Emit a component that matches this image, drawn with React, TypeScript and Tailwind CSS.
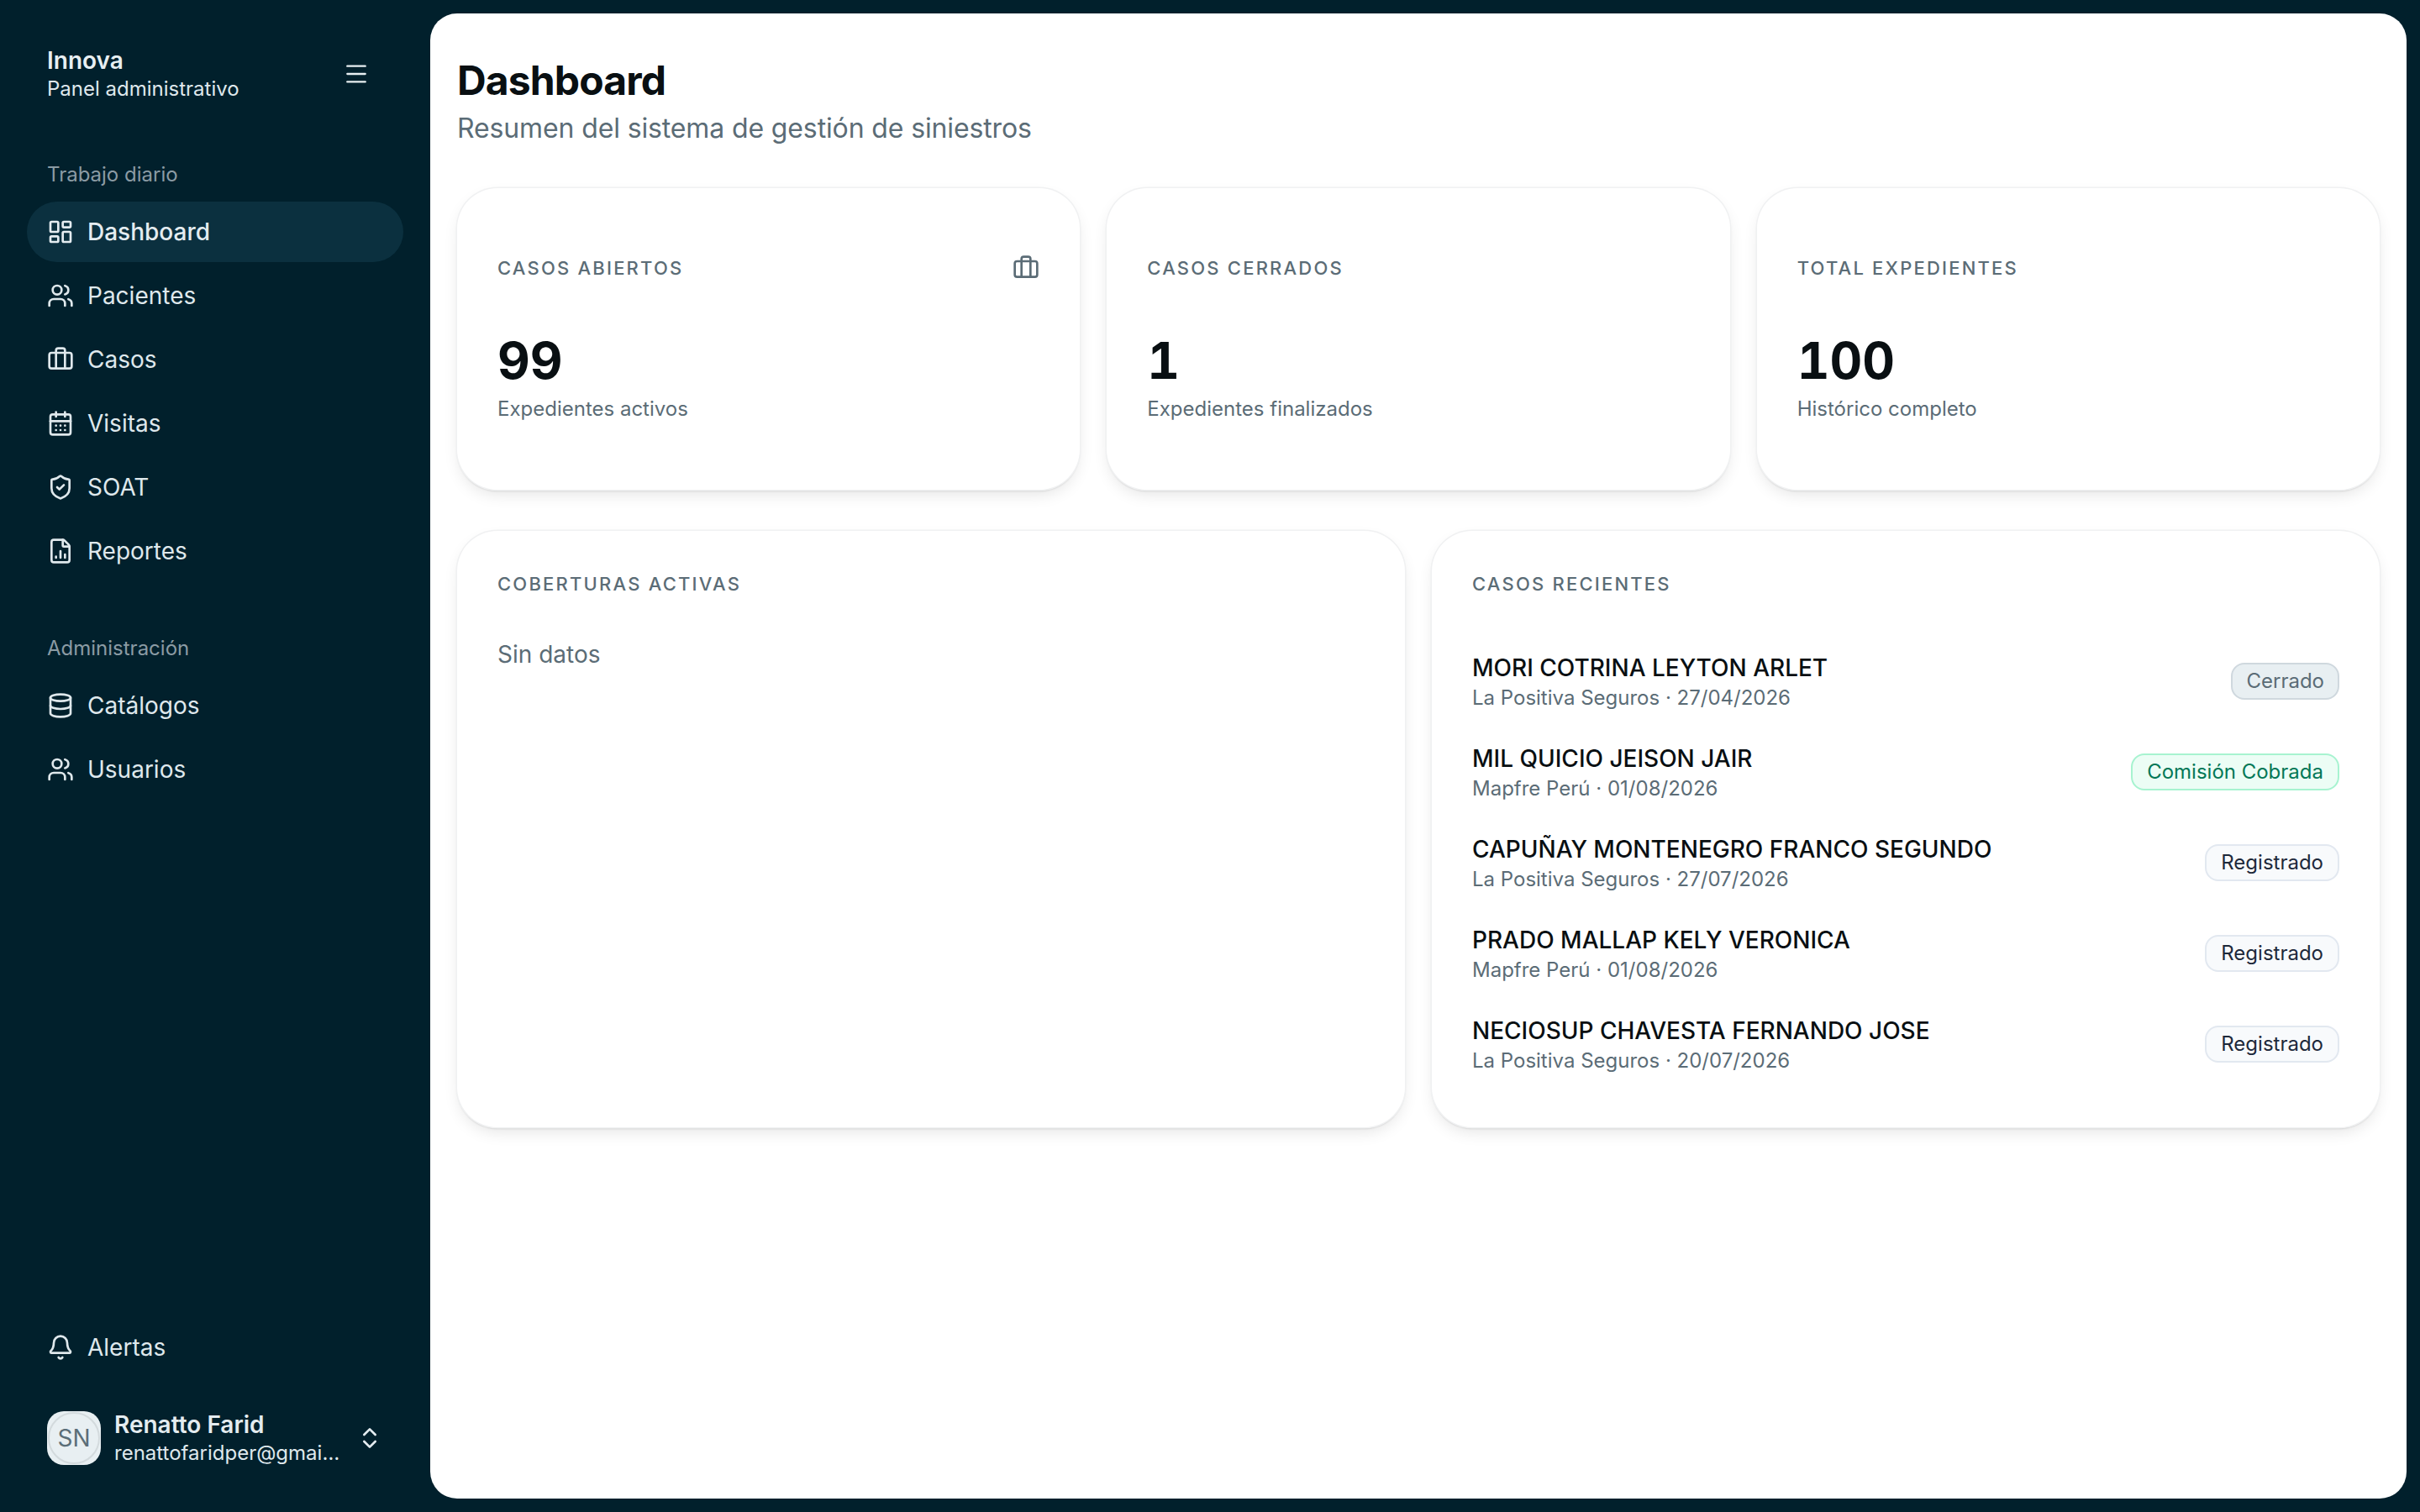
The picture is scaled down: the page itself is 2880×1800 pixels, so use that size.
import React from "react";
import { LayoutDashboard, Users, Briefcase, CalendarDays, ShieldCheck, FileChartColumn, Database, Bell, ChevronsUpDown, Menu } from "lucide-react";

const font = { fontFamily: "Inter, 'Noto Sans', sans-serif" };

const cardShadow = "shadow-[0_0_0_1.5px_#f0f1f2,0_2px_2px_rgba(0,0,0,0.14),0_8px_20px_-4px_rgba(0,0,0,0.12)]";

function NavItem({ icon: Icon, label, active }: { icon: any; label: string; active?: boolean }) {
  return (
    <div className={`flex h-[72px] items-center gap-4 rounded-full px-6 text-[28px] ${active ? "bg-[#0b303f] font-medium text-[#e4ecf0]" : "text-[#dfe8ec]"}`}>
      <Icon className="size-8 shrink-0" />
      <span>{label}</span>
    </div>
  );
}

function Stat({ label, value, sub, icon }: { label: string; value: string; sub: string; icon?: boolean }) {
  return (
    <div className={`flex h-[359px] flex-col rounded-[48px] bg-white px-12 pt-[79px] ${cardShadow}`}>
      <div className="flex h-8 items-center justify-between">
        <span className="text-[22px] font-medium tracking-[0.1em] text-[#5b6c76]">{label}</span>
        {icon && <Briefcase className="size-8 text-[#5b6c76]" />}
      </div>
      <div className="mt-[58px] text-[60px] leading-[72px] font-bold text-[#090f12] tabular-nums">{value}</div>
      <div className="mt-[4px] text-[24px] leading-[36px] text-[#5b6c76]">{sub}</div>
    </div>
  );
}

const cases = [
  { name: "MORI COTRINA LEYTON ARLET", sub: "La Positiva Seguros · 27/04/2026", status: "Cerrado", cls: "bg-[#e8eff2] border-[#cfd8de] text-[#5b6c76] px-4" },
  { name: "MIL QUICIO JEISON JAIR", sub: "Mapfre Perú · 01/08/2026", status: "Comisión Cobrada", cls: "bg-[#ecfdf5] border-[#a7f3d0] text-[#047857] px-[17px]" },
  { name: "CAPUÑAY MONTENEGRO FRANCO SEGUNDO", sub: "La Positiva Seguros · 27/07/2026", status: "Registrado", cls: "bg-[#f8fafc] border-[#e2e8f0] text-[#1e293b] px-[17px]" },
  { name: "PRADO MALLAP KELY VERONICA", sub: "Mapfre Perú · 01/08/2026", status: "Registrado", cls: "bg-[#f8fafc] border-[#e2e8f0] text-[#1e293b] px-[17px]" },
  { name: "NECIOSUP CHAVESTA FERNANDO JOSE", sub: "La Positiva Seguros · 20/07/2026", status: "Registrado", cls: "bg-[#f8fafc] border-[#e2e8f0] text-[#1e293b] px-[17px]" },
];

export default function App() {
  return (
    <div style={font} className="flex h-[1800px] w-[2880px] overflow-hidden bg-[#01202c]">
      <aside className="flex w-[512px] shrink-0 flex-col px-8 pt-[54px] pb-[54px] text-[#dfe8ec]">
        <div className="flex items-center justify-between pr-[40px] pl-6">
          <div>
            <div className="text-[28px] leading-[36px] font-semibold text-[#e8eff2]">Innova</div>
            <div className="text-[24px] leading-[32px] text-[#dfe8ec]">Panel administrativo</div>
          </div>
          <Menu className="size-8 text-[#e8eff2]" strokeWidth={1.75} />
        </div>
        <div className="mt-[69px] pl-6 text-[24px] leading-[34px] text-[#8b9ba4]">Trabajo diario</div>
        <nav className="mt-[15px] flex flex-col gap-1">
          <NavItem icon={LayoutDashboard} label="Dashboard" active />
          <NavItem icon={Users} label="Pacientes" />
          <NavItem icon={Briefcase} label="Casos" />
          <NavItem icon={CalendarDays} label="Visitas" />
          <NavItem icon={ShieldCheck} label="SOAT" />
          <NavItem icon={FileChartColumn} label="Reportes" />
        </nav>
        <div className="mt-[63px] pl-6 text-[24px] leading-[34px] text-[#8b9ba4]">Administración</div>
        <nav className="mt-[15px] flex flex-col gap-1">
          <NavItem icon={Database} label="Catálogos" />
          <NavItem icon={Users} label="Usuarios" />
        </nav>
        <div className="mt-auto">
          <NavItem icon={Bell} label="Alertas" />
          <div className="mt-[38px] flex items-center pr-6 pl-6">
            <div className="flex size-16 shrink-0 items-center justify-center rounded-[20px] bg-[#e8eff2]">
              <div className="flex size-[62px] items-center justify-center rounded-full border-2 border-[#d3dadd] text-[28px] text-[#5b6e78]">SN</div>
            </div>
            <div className="ml-4 min-w-0 flex-1">
              <div className="text-[28px] leading-[36px] font-semibold text-[#e4ecf0]">Renatto Farid</div>
              <div className="truncate text-[24px] leading-[32px] text-[#dfe8ec]">renattofaridper@gmail.com</div>
            </div>
            <ChevronsUpDown className="ml-[16px] size-8 shrink-0 text-[#e4ecf0]" />
          </div>
        </div>
      </aside>
      <main className="my-4 mr-4 flex-1 rounded-[32px] bg-white p-8">
        <h1 className="mt-5 text-[48px] leading-[56px] font-bold tracking-[-0.018em] text-[#090f12]">Dashboard</h1>
        <p className="mt-[5px] text-[32px] leading-[48px] tracking-[-0.004em] text-[#5b6c76]">Resumen del sistema de gestión de siniestros</p>
        <div className="mt-[47px] grid grid-cols-3 gap-8">
          <Stat label="CASOS ABIERTOS" value="99" sub="Expedientes activos" icon />
          <Stat label="CASOS CERRADOS" value="1" sub="Expedientes finalizados" />
          <Stat label="TOTAL EXPEDIENTES" value="100" sub="Histórico completo" />
        </div>
        <div className="mt-[49px] grid grid-cols-2 gap-8">
          <section className={`h-[710px] rounded-[48px] bg-white px-12 pt-[47px] ${cardShadow}`}>
            <h2 className="text-[22px] leading-[32px] font-medium tracking-[0.1em] text-[#5b6c76]">COBERTURAS ACTIVAS</h2>
            <p className="mt-[46px] text-[28px] leading-[44px] text-[#5b6c76]">Sin datos</p>
          </section>
          <section className={`h-[710px] rounded-[48px] bg-white px-12 pt-[47px] ${cardShadow}`}>
            <h2 className="text-[22px] leading-[32px] font-medium tracking-[0.1em] text-[#5b6c76]">CASOS RECIENTES</h2>
            <div className="mt-[66px] flex flex-col gap-[36px]">
              {cases.map((c) => (
                <div key={c.name} className="flex h-[72px] justify-between">
                  <div>
                    <div className="text-[28px] leading-[36px] font-medium text-[#090f12]">{c.name}</div>
                    <div className="text-[24px] leading-[36px] text-[#5b6c76]">{c.sub}</div>
                  </div>
                  <span className={`mt-[12px] h-[44px] rounded-[16px] border-2 text-[24px] leading-[40px] ${c.cls}`}>{c.status}</span>
                </div>
              ))}
            </div>
          </section>
        </div>
      </main>
    </div>
  );
}
